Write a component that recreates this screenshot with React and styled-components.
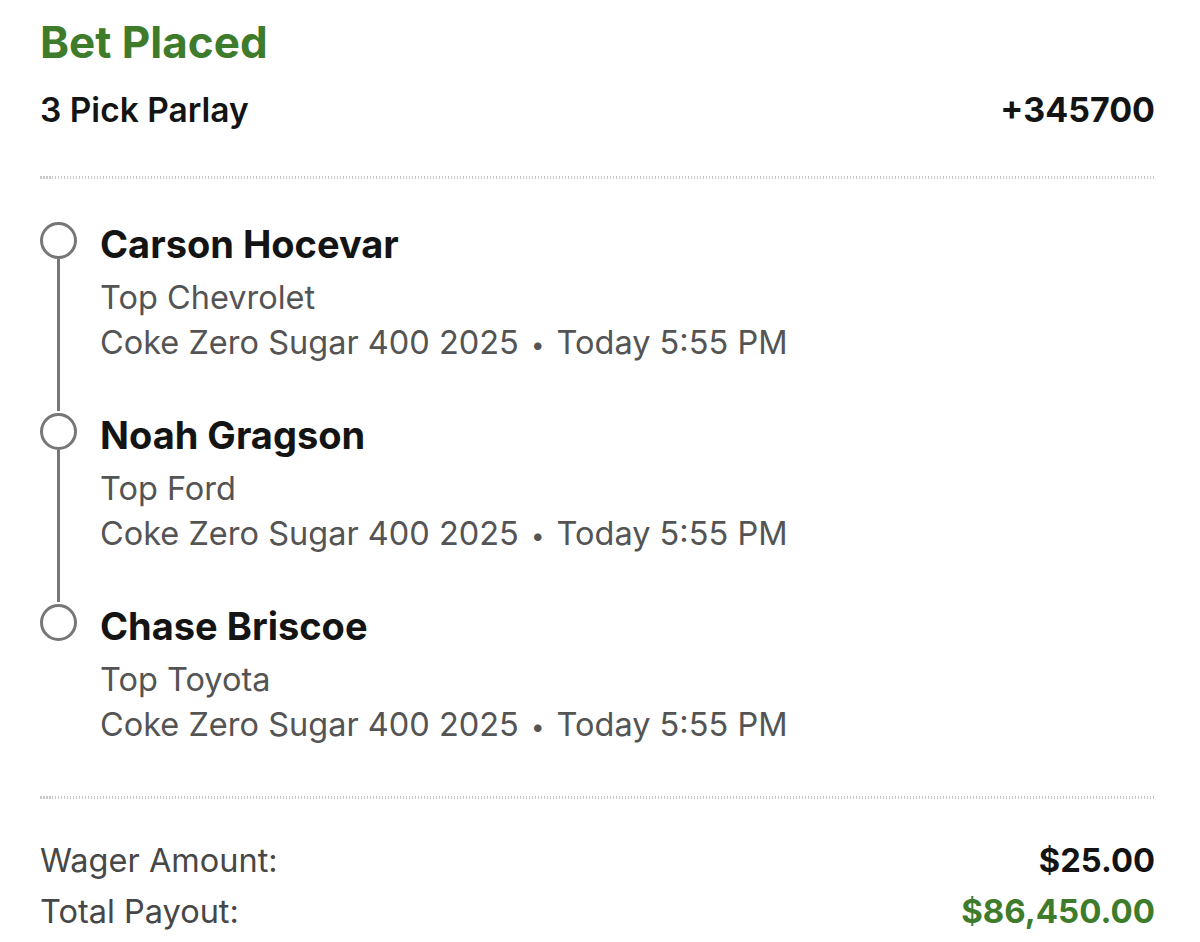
import React from 'react';
import styled, { createGlobalStyle } from 'styled-components';

const GlobalStyle = createGlobalStyle`
  html, body {
    margin: 0;
    padding: 0;
    background: #ffffff;
  }
  body {
    font-family: Inter, "Noto Sans", "Liberation Sans", sans-serif;
    color: #111111;
  }
`;

const GREEN = '#3e7c2c';

const Page = styled.div`
  width: 1200px;
  height: 942px;
  box-sizing: border-box;
  padding: 16px 45px 0 40px;
  overflow: hidden;
`;

const Title = styled.h1`
  margin: 0;
  font-size: 44px;
  line-height: 52px;
  font-weight: 700;
  color: ${GREEN};
`;

const Row = styled.div`
  display: flex;
  justify-content: space-between;
  align-items: baseline;
  margin-top: ${(p) => p.$top || 0}px;
`;

const ParlayLabel = styled.span`
  font-size: 33.5px;
  line-height: 40px;
  font-weight: 600;
  color: #141414;
`;

const Odds = styled.span`
  font-size: 34px;
  line-height: 40px;
  font-weight: 700;
  color: #141414;
`;

const Divider = styled.div`
  height: 3px;
  margin: ${(p) => p.$margin};
  background: repeating-linear-gradient(
    90deg,
    #c8c8c8 0 1.5px,
    transparent 1.5px 3px
  );
`;

const Legs = styled.div`
  display: flex;
  flex-direction: column;
`;

const Leg = styled.div`
  display: grid;
  grid-template-columns: 37px 1fr;
  column-gap: 23px;
  height: ${(p) => (p.$last ? 'auto' : '191px')};
`;

const Marker = styled.div`
  display: flex;
  flex-direction: column;
  align-items: center;
  padding-top: 2px;
`;

const Circle = styled.div`
  width: 37px;
  height: 37px;
  box-sizing: border-box;
  border: 3px solid #777777;
  border-radius: 50%;
  flex-shrink: 0;
`;

const Line = styled.div`
  width: 3px;
  flex: 1;
  background: #777777;
`;

const LegText = styled.div`
  display: flex;
  flex-direction: column;
`;

const Name = styled.div`
  font-size: 38px;
  line-height: 48px;
  margin-bottom: 7px;
  font-weight: 700;
  color: #141414;
`;

const Sub = styled.div`
  font-size: 32.5px;
  line-height: 45px;
  font-weight: 400;
  color: #545454;
  white-space: nowrap;
`;

const Dot = styled.span`
  font-size: 24px;
  line-height: 0;
  margin: 0 3px;
  vertical-align: 1px;
`;

const Summary = styled.div`
  display: flex;
  flex-direction: column;
`;

const SumLabel = styled.span`
  font-size: 32.5px;
  line-height: 51px;
  color: #474747;
`;

const SumValue = styled.span`
  font-size: ${(p) => (p.$green ? 33 : 32.7)}px;
  line-height: 51px;
  font-weight: 700;
  color: ${(p) => (p.$green ? GREEN : '#141414')};
`;

const legs = [
  { name: 'Carson Hocevar', market: 'Top Chevrolet' },
  { name: 'Noah Gragson', market: 'Top Ford' },
  { name: 'Chase Briscoe', market: 'Top Toyota' },
];

export default function App() {
  return (
    <>
      <GlobalStyle />
      <Page>
        <Title>Bet Placed</Title>
        <Row $top={22}>
          <ParlayLabel>3 Pick Parlay</ParlayLabel>
          <Odds>+345700</Odds>
        </Row>
        <Divider $margin="46px 0 41px" />
        <Legs>
          {legs.map((leg, i) => {
            const last = i === legs.length - 1;
            return (
              <Leg key={leg.name} $last={last}>
                <Marker>
                  <Circle />
                  {!last && <Line />}
                </Marker>
                <LegText>
                  <Name>{leg.name}</Name>
                  <Sub>{leg.market}</Sub>
                  <Sub>
                    Coke Zero Sugar 400 2025 <Dot>•</Dot> Today 5:55 PM
                  </Sub>
                </LegText>
              </Leg>
            );
          })}
        </Legs>
        <Divider $margin="49px 0 36px" />
        <Summary>
          <Row>
            <SumLabel>Wager Amount:</SumLabel>
            <SumValue>$25.00</SumValue>
          </Row>
          <Row>
            <SumLabel>Total Payout:</SumLabel>
            <SumValue $green>$86,450.00</SumValue>
          </Row>
        </Summary>
      </Page>
    </>
  );
}
